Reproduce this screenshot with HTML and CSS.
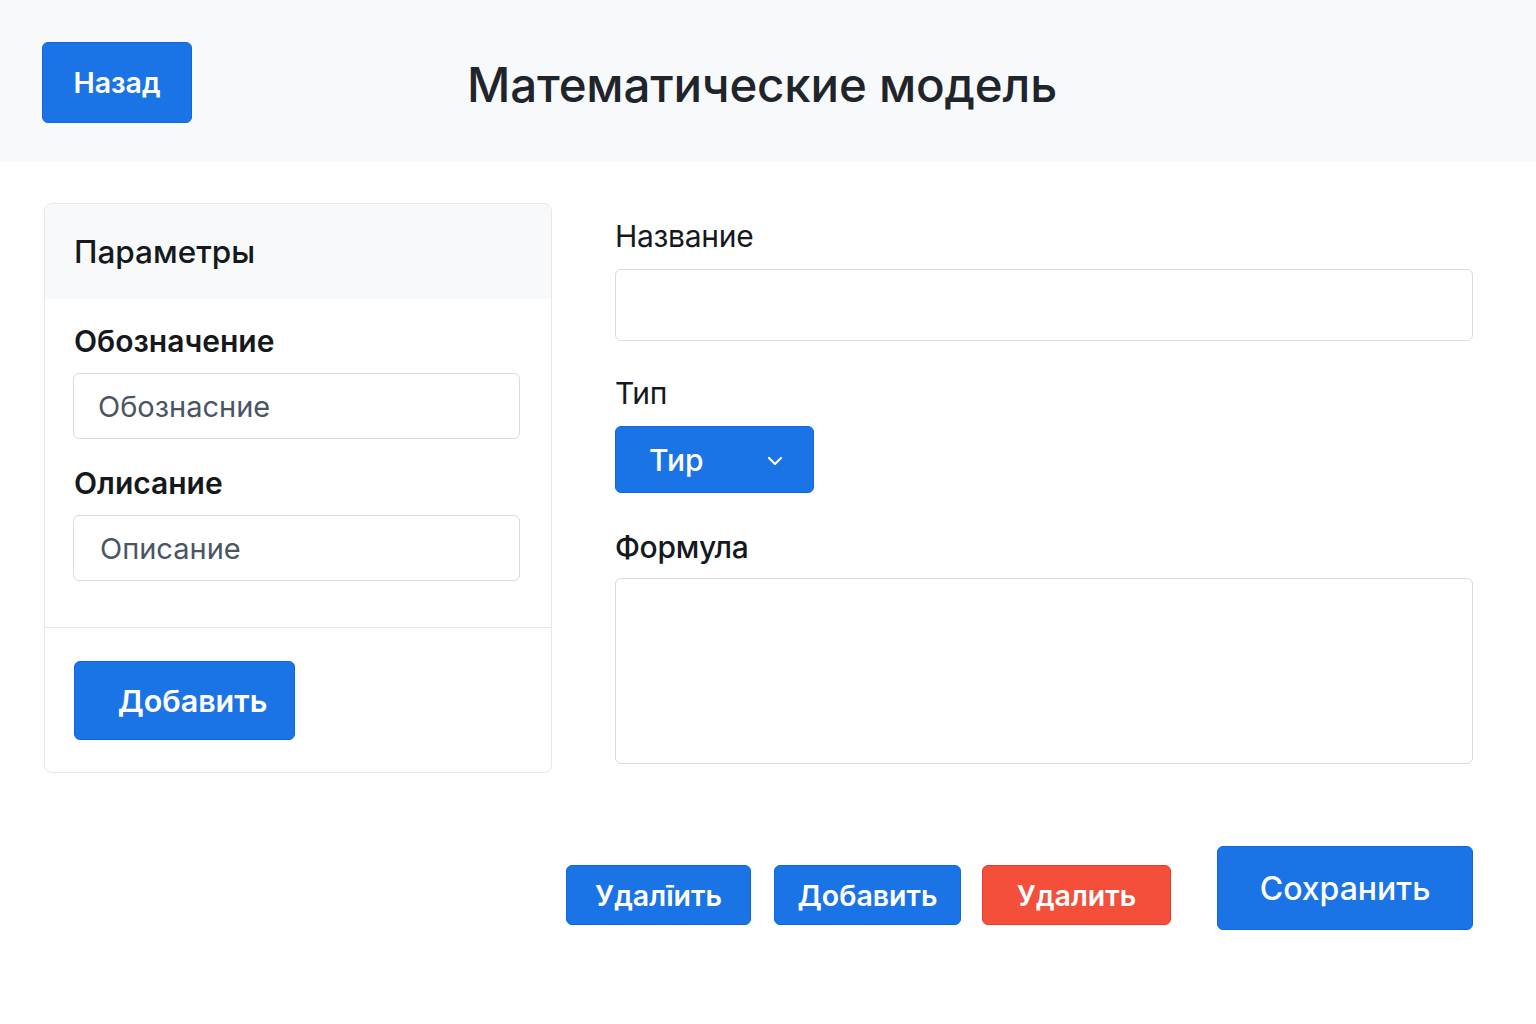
FILE: index.html
```html
<!DOCTYPE html>
<html lang="ru">
<head>
<meta charset="utf-8">
<title>Математические модель</title>
<link rel="stylesheet" href="styles.css">
</head>
<body>
<header class="topbar">
  <div class="topbar-left"><button class="btn btn-back">Назад</button></div>
  <h1 class="title">Математические модель</h1>
  <div></div>
</header>
<main class="main">
  <section class="card">
    <div class="card-header">Параметры</div>
    <div class="card-body">
      <label class="label-bold">Обозначение</label>
      <input class="input input-sm" placeholder="Обознасние">
      <label class="label-bold label-gap">Олисание</label>
      <input class="input input-sm input-pad2" placeholder="Описание">
    </div>
    <div class="card-footer">
      <button class="btn btn-add">Добавить</button>
    </div>
  </section>
  <section class="form">
    <label class="label">Название</label>
    <input class="input input-lg">
    <label class="label label-type">Тип</label>
    <button class="btn btn-select"><span>Тир</span>
      <svg width="16" height="10" viewBox="0 0 16 10" fill="none"><path d="M2 2l6 6 6-6" stroke="#fff" stroke-width="2.2" stroke-linecap="round" stroke-linejoin="round"/></svg>
    </button>
    <label class="label label-formula">Формула</label>
    <textarea class="input textarea"></textarea>
  </section>
</main>
<div class="actions">
  <button class="btn btn-sm w1">Удалīить</button>
  <button class="btn btn-sm w2">Добавить</button>
  <button class="btn btn-sm btn-red w3">Удалить</button>
  <button class="btn btn-save">Сохранить</button>
</div>
</body>
</html>
```
FILE: styles.css
```css
* { box-sizing: border-box; }
body {
  margin: 0;
  background: #ffffff;
  font-family: Inter, "Noto Sans", "Liberation Sans", sans-serif;
  color: #1d2329;
}
.topbar {
  height: 162px;
  background: #f8f9fb;
  display: grid;
  grid-template-columns: 1fr auto 1fr;
  align-items: center;
  padding: 0 42px;
}
.title {
  margin: 0;
  font-size: 47.5px;
  font-weight: 500;
  color: #1f252b;
  letter-spacing: -0.2px;
  padding-top: 6px;
  position: relative;
  left: -6px;
}
.btn {
  font-family: Inter, "Noto Sans", "Liberation Sans", sans-serif;
  background: #1b74e6;
  border: 1px solid #0f66df;
  color: #fff;
  border-radius: 6px;
  cursor: pointer;
  padding: 0;
}
.btn-back {
  width: 150px;
  height: 81px;
  font-size: 28.5px;
  font-weight: 600;
  margin-top: 2px;
}
.main {
  display: grid;
  grid-template-columns: 508px 1fr;
  column-gap: 63px;
  padding: 41px 63px 0 44px;
  align-items: start;
}
.card {
  border: 1px solid #e4e8ed;
  border-radius: 8px;
  overflow: hidden;
}
.card-header {
  height: 95px;
  background: #f8f9fa;
  padding: 0 29px;
  display: flex;
  align-items: center;
  font-size: 31.5px;
  font-weight: 500;
  color: #15191d;
}
.card-body {
  padding: 22px 30px 46px 28px;
  display: flex;
  flex-direction: column;
  border-bottom: 1px solid #e4e8ed;
}
.label-bold {
  font-size: 30px;
  font-weight: 600;
  line-height: 40px;
  color: #15191d;
  margin-bottom: 12px;
  padding-left: 1px;
}
.label-gap { margin-top: 24px; }
.input {
  border: 1.5px solid #d3dbe5;
  border-radius: 6px;
  background: #fff;
  font-family: Inter, "Noto Sans", "Liberation Sans", sans-serif;
  outline: none;
}
.input-sm {
  height: 66px;
  padding: 0 24px;
  font-size: 29px;
  width: 447px;
}
.input-pad2 { padding-left: 26px; }
.input-sm::placeholder { color: #4a5562; }
.card-footer {
  padding: 33px 30px 32px 29px;
}
.btn-add {
  width: 221px;
  height: 79px;
  font-size: 30.5px;
  font-weight: 600;
  padding-left: 16px;
}
.form {
  display: flex;
  flex-direction: column;
  align-items: flex-start;
  padding-top: 13px;
}
.label {
  font-size: 30px;
  font-weight: 400;
  line-height: 40px;
  color: #15191d;
  letter-spacing: -0.3px;
}
.input-lg {
  width: 100%;
  height: 72px;
  margin-top: 13px;
}
.label-type { margin-top: 32px; }
.btn-select {
  margin-top: 13px;
  width: 199px;
  height: 67px;
  display: flex;
  align-items: center;
  justify-content: space-between;
  padding: 0 30px 0 33px;
  font-size: 30px;
  font-weight: 500;
}
.btn-select svg { margin-top: 2px; }
.label-formula {
  margin-top: 34px;
  font-weight: 500;
  font-size: 30px;
}
.textarea {
  width: 100%;
  height: 186px;
  margin-top: 11px;
  resize: none;
}
.actions {
  display: flex;
  justify-content: flex-end;
  align-items: flex-start;
  padding: 73px 63px 0 0;
}
.btn-sm {
  height: 60px;
  margin-top: 19px;
  font-size: 28.5px;
  font-weight: 600;
}
.w1 { width: 185px; margin-right: 23px; }
.w2 { width: 187px; margin-right: 21px; }
.w3 { width: 189px; margin-right: 46px; }
.btn-red {
  background: #f44f3a;
  border-color: #ea3a24;
}
.btn-save {
  width: 256px;
  height: 84px;
  font-size: 32px;
  font-weight: 500;
}
```
